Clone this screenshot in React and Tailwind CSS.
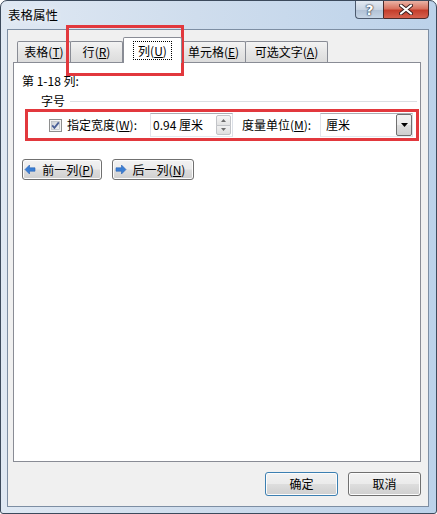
import React from 'react';

const font = "font-['Noto_Sans_CJK_SC',sans-serif]";

function Tab({ label, keyChar, suffix = ')', width, selected }) {
  if (selected) {
    return (
      <div className={`${width} h-[26px] -mb-px relative z-10 bg-white border border-b-0 border-[#898c95] rounded-t-[2px] flex items-center justify-center`}>
        <span className="px-[4px] border border-dotted border-black leading-[17px] text-[12px]">
          {label}(<u>{keyChar}</u>{suffix}
        </span>
      </div>
    );
  }
  return (
    <div className={`${width} h-[21px] -ml-px first:ml-0 border border-b-0 border-[#898c95] rounded-t-[2px] bg-[linear-gradient(180deg,#f3f3f3,#e6e6e6_50%,#dcdcdc)] flex items-center justify-center text-[12px] leading-[16px]`}>
      <span>
        {label}(<u>{keyChar}</u>{suffix}
      </span>
    </div>
  );
}

function Checkbox() {
  return (
    <svg width="13" height="13" viewBox="0 0 13 13" className="shrink-0">
      <defs>
        <linearGradient id="cbg" x1="0" y1="0" x2="1" y2="1">
          <stop offset="0" stopColor="#cbcfd5" />
          <stop offset="1" stopColor="#f6f6f6" />
        </linearGradient>
      </defs>
      <rect x="0.5" y="0.5" width="12" height="12" fill="#f4f4f4" stroke="#8e8f8f" />
      <rect x="2.5" y="2.5" width="8" height="8" fill="url(#cbg)" stroke="#aeb3b9" strokeWidth="0.6" />
      <path d="M3.2 6.4 L5.4 8.8 L9.8 3.4" fill="none" stroke="#4a5f97" strokeWidth="1.8" />
    </svg>
  );
}

function Arrow({ dir }) {
  return (
    <svg width="12" height="11" viewBox="0 0 12 11" className="shrink-0">
      <g transform={dir === 'left' ? '' : 'translate(12,0) scale(-1,1)'}>
        <path d="M1 5.5 L5.5 1 L5.5 3.8 L11 3.8 L11 7.2 L5.5 7.2 L5.5 10 Z" fill="#3b7fd4" stroke="#2a63b5" strokeWidth="0.6" />
      </g>
    </svg>
  );
}

function Button({ children, width, isDefault }) {
  return (
    <div
      className={`${width} h-full rounded-[3px] border ${isDefault ? 'border-[#3c7fb1]' : 'border-[#707070]'} bg-[linear-gradient(180deg,#f2f2f2_0%,#ebebeb_48%,#dddddd_52%,#cfcfcf_100%)] shadow-[inset_0_0_0_1px_#fcfcfc] flex items-center justify-center text-[12px] leading-[16px]`}
    >
      {children}
    </div>
  );
}

export default function App() {
  return (
    <div className={`${font} relative w-[437px] h-[514px] overflow-hidden border border-[#3c4a5c] rounded-t-[7px] rounded-b-[3px] bg-[linear-gradient(90deg,#dfe8f3_0%,#cfdded_45%,#bcd2ea_100%)] text-black`}>
      {/* title bar */}
      <div className="h-[28px] flex items-start justify-between pr-[7px]">
        <div className="pl-[7px] pt-[5px] text-[12.5px] leading-[18px] [text-shadow:0_0_6px_#ffffff]">表格属性</div>
        <div className="flex -mt-px h-[19px]">
          <div className="w-[28px] h-full border border-r-0 border-[#4c5a6e] rounded-bl-[4px] bg-[linear-gradient(180deg,#e2e9f2_0%,#c8d4e2_50%,#b2c2d6_55%,#c6d5e6_100%)] flex items-center justify-center">
            <span className="text-white font-bold text-[14px] leading-[14px] font-['DejaVu_Sans',sans-serif] [text-shadow:0_0_1px_#2d3a4c,0_0_1px_#2d3a4c,0_0_2px_#2d3a4c]">?</span>
          </div>
          <div className="w-[46px] h-full border border-[#4a2b2b] rounded-br-[4px] bg-[linear-gradient(180deg,#eab3a6_0%,#d8725f_45%,#c43e2c_55%,#d6614e_100%)] flex items-center justify-center">
            <svg width="14" height="11" viewBox="0 0 14 11">
              <path d="M2 1.5 L12 9.5 M12 1.5 L2 9.5" stroke="#3a2020" strokeWidth="4" strokeLinecap="round" />
              <path d="M2 1.5 L12 9.5 M12 1.5 L2 9.5" stroke="#ffffff" strokeWidth="2.2" strokeLinecap="round" />
            </svg>
          </div>
        </div>
      </div>

      {/* client area */}
      <div className="ml-[6px] w-[422px] h-[478px] border border-[#7d8ea3] bg-[#f0f0f0] flex flex-col">
        {/* tabs */}
        <div className="mt-[7px] pl-[9px] h-[25px] flex items-end text-[12px]">
          <Tab label="表格" keyChar="T" width="w-[54px]" />
          <Tab label="行" keyChar="R" width="w-[53px]" />
          <Tab label="列" keyChar="U" width="w-[59px]" selected />
          <Tab label="单元格" keyChar="E" width="w-[65px]" />
          <Tab label="可选文字" keyChar="A" width="w-[83px]" />
        </div>

        {/* panel */}
        <div className="ml-[5px] w-[408px] h-[400px] bg-white border border-[#898c95] text-[12px] leading-[16px]">
          <div className="pl-[8px] pt-[10px]">第 1-18 列:</div>
          <div className="mt-[4px] pl-[27px] pr-[3px] flex items-center">
            <span>字号</span>
            <div className="ml-[5px] flex-1 h-px bg-[#dcdfe3]"></div>
          </div>

          <div className="mt-[4px] h-[24px] pl-[35px] flex items-center">
            <Checkbox />
            <span className="ml-[5px] w-[83px]">
              指定宽度(<u>W</u>):
            </span>
            <div className="w-[83px] h-full border border-[#abadb3] border-b-[#e3e9ef] border-l-[#e2e3ea] border-r-[#dbdfe6] flex items-center bg-white">
              <span className="pl-[2px] flex-1">0.94 厘米</span>
              <div className="w-[16px] h-full flex flex-col py-[1px] pr-[1px]">
                <div className="flex-1 border border-[#c2c4c8] rounded-t-[2px] bg-[linear-gradient(180deg,#f6f6f6,#e3e3e3)] flex items-center justify-center">
                  <svg width="5" height="3" viewBox="0 0 5 3"><path d="M0 3 L2.5 0 L5 3 Z" fill="#6d6d6d" /></svg>
                </div>
                <div className="flex-1 -mt-px border border-[#c2c4c8] rounded-b-[2px] bg-[linear-gradient(180deg,#f1f1f1,#dfdfdf)] flex items-center justify-center">
                  <svg width="5" height="3" viewBox="0 0 5 3"><path d="M0 0 L2.5 3 L5 0 Z" fill="#6d6d6d" /></svg>
                </div>
              </div>
            </div>
            <span className="ml-[9px] w-[78px]">
              度量单位(<u>M</u>):
            </span>
            <div className="w-[93px] h-full border border-[#abadb3] border-b-[#e3e9ef] border-l-[#e2e3ea] border-r-[#dbdfe6] flex items-center bg-white">
              <span className="pl-[5px] flex-1">厘米</span>
              <div className="w-[16px] h-[22px] mr-[0px] border border-[#707070] rounded-[2px] bg-[linear-gradient(180deg,#f2f2f2_0%,#ebebeb_48%,#dddddd_52%,#cfcfcf_100%)] flex items-center justify-center">
                <svg width="7" height="4" viewBox="0 0 7 4"><path d="M0 0 L7 0 L3.5 4 Z" fill="#000" /></svg>
              </div>
            </div>
          </div>

          <div className="mt-[22px] pl-[8px] h-[21px] flex gap-[10px]">
            <Button width="w-[80px]">
              <div className="flex items-center gap-[6px] -ml-[6px]">
                <Arrow dir="left" />
                <span>前一列(<u>P</u>)</span>
              </div>
            </Button>
            <Button width="w-[82px]">
              <div className="flex items-center gap-[6px] -ml-[6px]">
                <Arrow dir="right" />
                <span>后一列(<u>N</u>)</span>
              </div>
            </Button>
          </div>
        </div>

        {/* bottom buttons */}
        <div className="mt-[10px] h-[24px] pr-[7px] flex justify-end gap-[10px]">
          <Button width="w-[73px]" isDefault>确定</Button>
          <Button width="w-[73px]">取消</Button>
        </div>
      </div>

      {/* annotation boxes */}
      <div className="absolute left-[65px] top-[24px] w-[118px] h-[51px] border-[3px] border-[#e2383d] pointer-events-none"></div>
      <div className="absolute left-[24px] top-[108px] w-[394px] h-[32px] border-[3px] border-[#e2383d] pointer-events-none"></div>
    </div>
  );
}
